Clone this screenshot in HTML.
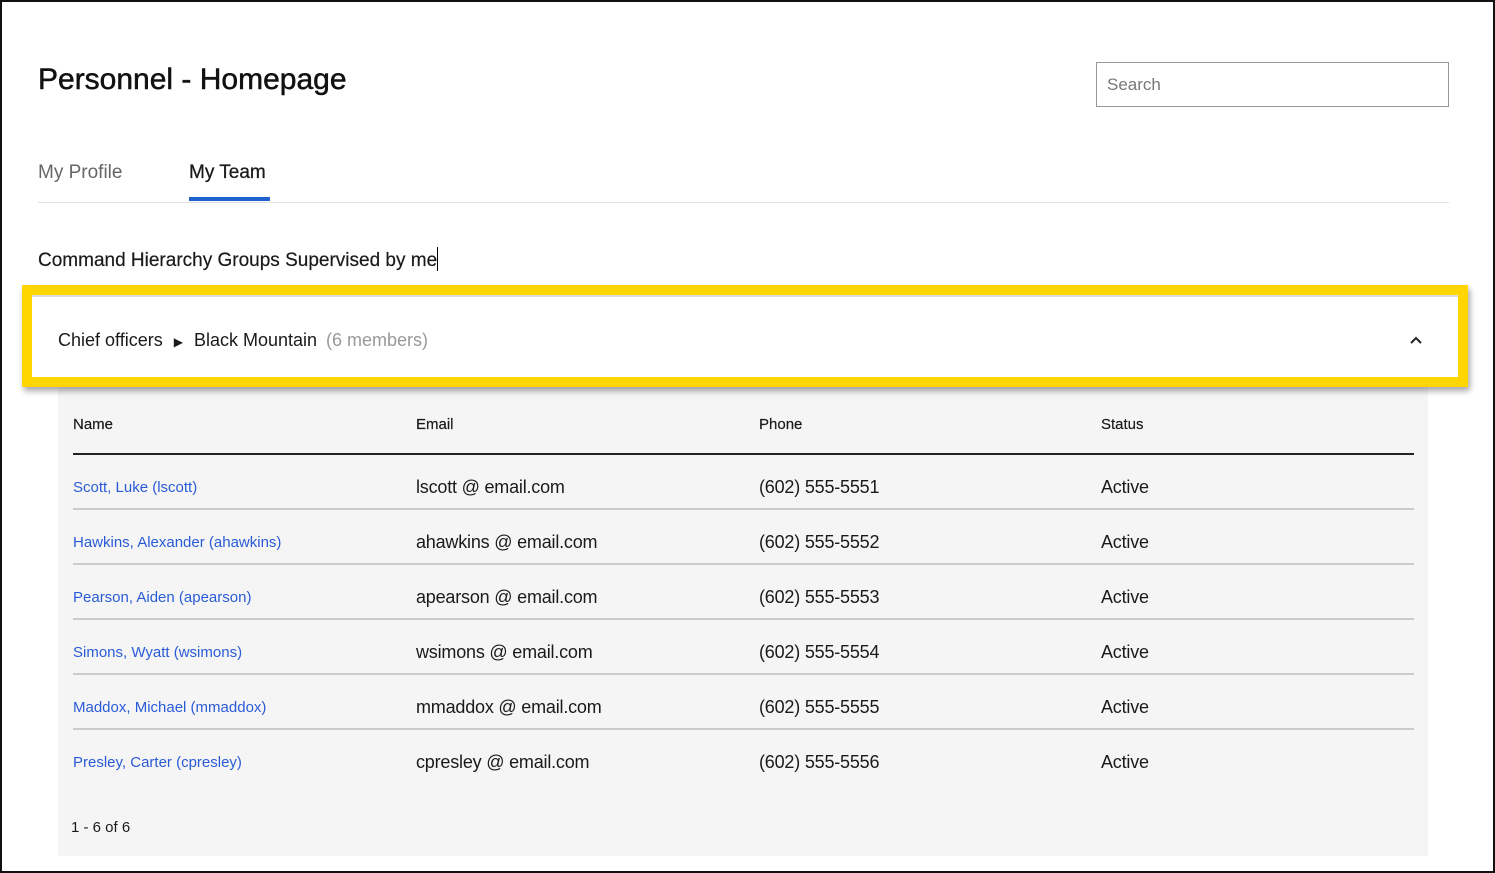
<!DOCTYPE html>
<html><head><style>
*{box-sizing:border-box;margin:0;padding:0}
body{width:1495px;height:873px;background:#fff;font-family:"Liberation Sans",sans-serif;color:#1a1a1a;position:relative;overflow:hidden}
.frame{position:absolute;left:0;top:0;width:1495px;height:873px;border:2px solid #111}
.abs{position:absolute;white-space:nowrap}
h1{position:absolute;left:38px;top:63px;font-size:30px;font-weight:normal;color:#111;-webkit-text-stroke:0.5px #111}
.search{position:absolute;left:1096px;top:62px;width:353px;height:45px;border:1px solid #999;font-size:17px;color:#777;padding:12px 10px}
.tab{position:absolute;top:162px;font-size:19px}
.tabline{position:absolute;left:38px;top:202px;width:1411px;height:1px;background:#e0e0e0}
.panel{position:absolute;left:58px;top:386px;width:1370px;height:470px;background:#f5f5f5}
.yb{position:absolute;left:22px;top:285px;width:1446px;height:102px;background:#ffd600;box-shadow:2px 4px 6px rgba(0,0,0,.35)}
.yin{position:absolute;left:10px;top:10px;right:10px;bottom:10px;background:#fff;border-top:2px solid #ddd}
.hd{font-size:15px;top:416px;-webkit-text-stroke:0.2px #1a1a1a}
.line{position:absolute;left:73px;width:1341px;height:2px;background:#ccc}
.nm{color:#2a5bd7;font-size:15px}
.c{font-size:18px;letter-spacing:-0.2px}
</style></head><body>
<div class="frame"></div>
<h1>Personnel - Homepage</h1>
<div class="search">Search</div>
<div class="tab" style="left:38px;color:#666">My Profile</div>
<div class="tab" style="left:189px;color:#1a1a1a;-webkit-text-stroke:0.3px #1a1a1a">My Team</div>
<div class="abs" style="left:189px;top:197px;width:81px;height:4px;background:#1e62d0"></div>
<div class="tabline"></div>
<div class="abs" style="left:38px;top:247px;font-size:19px;-webkit-text-stroke:0.2px #1a1a1a">Command Hierarchy Groups Supervised by me<span style="display:inline-block;width:1px;height:24px;background:#000;vertical-align:-5px"></span></div>
<div class="panel"></div>
<div class="yb"><div class="yin">
<div class="abs" style="left:26px;top:33px;font-size:18px">Chief officers <span style="font-size:12px;margin:0 6px 0 6px">&#9654;</span> Black Mountain <span style="color:#999;margin-left:4px">(6 members)</span></div>
<svg class="abs" style="left:1377px;top:38px" width="14" height="10" viewBox="0 0 14 10"><path d="M2 8 L7 3 L12 8" stroke="#222" stroke-width="2" fill="none"/></svg>
</div></div>
<div class="abs hd" style="left:73px">Name</div>
<div class="abs hd" style="left:416px">Email</div>
<div class="abs hd" style="left:759px">Phone</div>
<div class="abs hd" style="left:1101px">Status</div>
<div class="line" style="top:453px;background:#222"></div>
<div class="line" style="top:508px"></div>
<div class="line" style="top:563px"></div>
<div class="line" style="top:618px"></div>
<div class="line" style="top:673px"></div>
<div class="line" style="top:728px"></div>

<div class="abs nm" style="left:73px;top:479px">Scott, Luke (lscott)</div><div class="abs c" style="left:416px;top:477px">lscott @ email.com</div><div class="abs c" style="left:759px;top:477px">(602) 555-5551</div><div class="abs c" style="left:1101px;top:477px">Active</div>
<div class="abs nm" style="left:73px;top:534px">Hawkins, Alexander (ahawkins)</div><div class="abs c" style="left:416px;top:532px">ahawkins @ email.com</div><div class="abs c" style="left:759px;top:532px">(602) 555-5552</div><div class="abs c" style="left:1101px;top:532px">Active</div>
<div class="abs nm" style="left:73px;top:589px">Pearson, Aiden (apearson)</div><div class="abs c" style="left:416px;top:587px">apearson @ email.com</div><div class="abs c" style="left:759px;top:587px">(602) 555-5553</div><div class="abs c" style="left:1101px;top:587px">Active</div>
<div class="abs nm" style="left:73px;top:644px">Simons, Wyatt (wsimons)</div><div class="abs c" style="left:416px;top:642px">wsimons @ email.com</div><div class="abs c" style="left:759px;top:642px">(602) 555-5554</div><div class="abs c" style="left:1101px;top:642px">Active</div>
<div class="abs nm" style="left:73px;top:699px">Maddox, Michael (mmaddox)</div><div class="abs c" style="left:416px;top:697px">mmaddox @ email.com</div><div class="abs c" style="left:759px;top:697px">(602) 555-5555</div><div class="abs c" style="left:1101px;top:697px">Active</div>
<div class="abs nm" style="left:73px;top:754px">Presley, Carter (cpresley)</div><div class="abs c" style="left:416px;top:752px">cpresley @ email.com</div><div class="abs c" style="left:759px;top:752px">(602) 555-5556</div><div class="abs c" style="left:1101px;top:752px">Active</div>
<div class="abs" style="left:71px;top:819px;font-size:15px">1 - 6 of 6</div>
</body></html>
